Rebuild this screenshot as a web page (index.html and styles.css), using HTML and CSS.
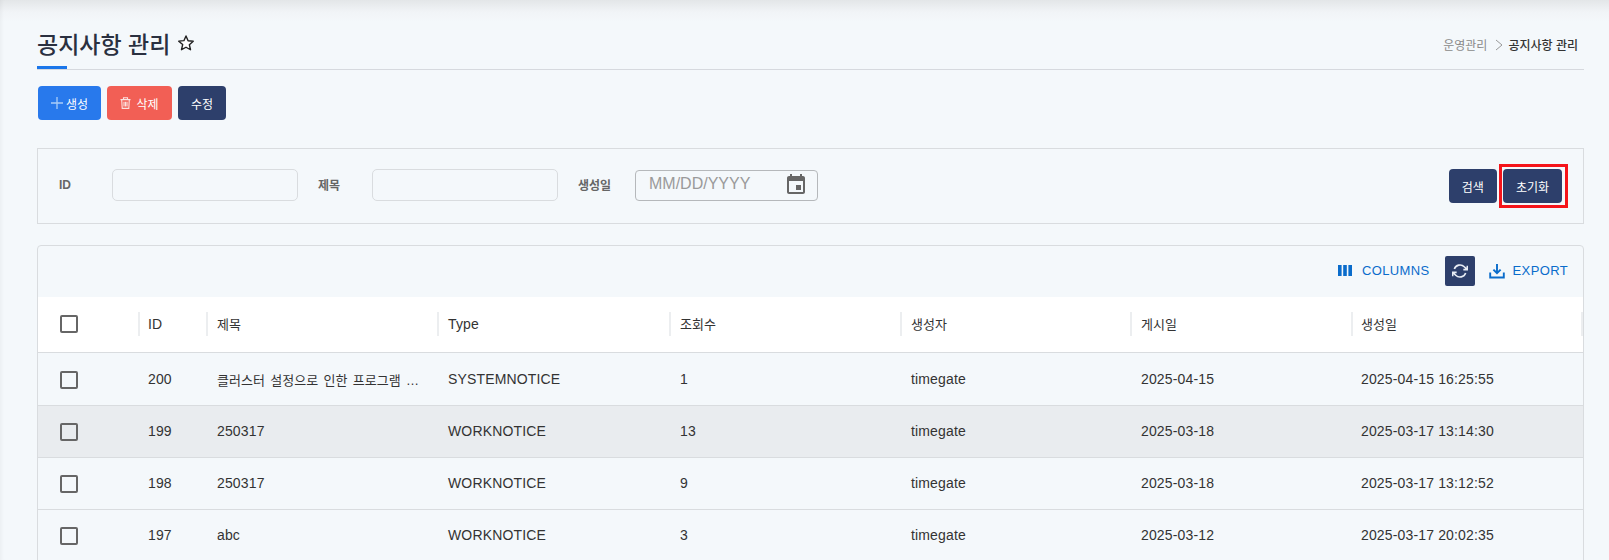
FILE: index.html
```html
<!DOCTYPE html>
<html lang="ko">

<head>
  <meta charset="UTF-8">
  <meta name="viewport" content="width=device-width, initial-scale=1.0">
  <title>공지사항 관리</title>
  <link rel="stylesheet" href="styles.css">
</head>

<body>
  <div class="page">
    <!-- Title -->
    <div class="page-head">
      <div class="page-title">
        <h1>공지사항 관리</h1>
        <svg class="star" viewBox="0 0 24 24" width="20" height="20">
          <path d="M12 3.6l2.5 5.7 6.2.6-4.7 4.1 1.4 6.1L12 17.1l-5.4 2.9 1.4-6.1-4.7-4.1 6.2-.6z" fill="#fff" stroke="#222" stroke-width="1.7" stroke-linejoin="round" />
        </svg>
      </div>
      <div class="breadcrumb">
        <span>운영관리</span>
        <svg viewBox="0 0 10 12" width="10" height="12">
          <path d="M3 1l6 5-6 5" fill="none" stroke="#999" stroke-width="1" />
        </svg>
        <strong>공지사항 관리</strong>
      </div>
    </div>

    <div class="actions">
      <button type="button" class="btn btn-blue">
        <svg viewBox="0 0 12 12" width="12" height="12">
          <path d="M6 0v12M0 6h12" stroke="#a9cdf8" stroke-width="1.3" fill="none" />
        </svg>
        생성
      </button>
      <button type="button" class="btn btn-red">
        <svg viewBox="0 0 11 12" width="11" height="12">
          <path d="M.5 2.6h10M3.5 2.4V.7h4v1.7M1.7 2.8l.5 8.6h6.6l.5-8.6M4 4.8v4.6M5.5 4.8v4.6M7 4.8v4.6" stroke="#fbe3e0" stroke-width="1.1" fill="none" />
        </svg>
        삭제
      </button>
      <button type="button" class="btn btn-navy">수정</button>
    </div>

    <!-- Search -->
    <form class="search-box">
      <label class="search-label label-id">ID</label>
      <input type="text" class="search-input">
      <label class="search-label">제목</label>
      <input type="text" class="search-input">
      <label class="search-label label-date">생성일</label>
      <div class="date-input">
        <span>MM/DD/YYYY</span>
        <svg viewBox="0 0 24 24" width="24" height="24">
          <path fill="#666" d="M17 12h-5v5h5v-5zM16 1v2H8V1H6v2H5c-1.1 0-2 .9-2 2v14c0 1.1.9 2 2 2h14c1.1 0 2-.9 2-2V5c0-1.1-.9-2-2-2h-1V1h-2zm3 18H5V8h14v11z" />
        </svg>
      </div>
      <div class="search-buttons">
        <button type="button" class="btn btn-navy">검색</button>
        <button type="button" class="btn btn-navy btn-marked">초기화</button>
      </div>
    </form>

    <!-- Grid -->
    <div class="grid-box">
      <div class="toolbar">
        <button type="button" class="tool-btn">
          <svg viewBox="0 0 14 11" width="14" height="11">
            <path fill="#0a6ccb" d="M0 0h3.6v11H0zM5.2 0h3.6v11H5.2zM10.4 0H14v11h-3.6z" />
          </svg>
          COLUMNS
        </button>
        <button type="button" class="refresh-btn">
          <svg viewBox="0 0 24 24" width="16" height="16">
            <path d="M23 4v6h-6M1 20v-6h6M3.5 9a9 9 0 0 1 14.9-3.4L23 10M1 14l4.6 4.4A9 9 0 0 0 20.5 15" fill="none" stroke="#e8edf5" stroke-width="2.4" />
          </svg>
        </button>
        <button type="button" class="tool-btn tool-export">
          <svg viewBox="0 0 16 16" width="16" height="16">
            <path d="M8 1v9M4.4 6.6L8 10.2l3.6-3.6M1.2 9.5v5h13.6v-5" fill="none" stroke="#0a6ccb" stroke-width="1.9" />
          </svg>
          EXPORT
        </button>
      </div>

      <div class="grid-row grid-head">
        <div class="cell"><span class="check"></span></div>
        <div class="cell">ID</div>
        <div class="cell ko">제목</div>
        <div class="cell">Type</div>
        <div class="cell ko">조회수</div>
        <div class="cell ko">생성자</div>
        <div class="cell ko">게시일</div>
        <div class="cell ko">생성일</div>
      </div>

      <div class="grid-row">
        <div class="cell"><span class="check"></span></div>
        <div class="cell">200</div>
        <div class="cell ko">클러스터 설정으로 인한 프로그램 …</div>
        <div class="cell">SYSTEMNOTICE</div>
        <div class="cell">1</div>
        <div class="cell">timegate</div>
        <div class="cell">2025-04-15</div>
        <div class="cell">2025-04-15 16:25:55</div>
      </div>
      <div class="grid-row row-hover">
        <div class="cell"><span class="check"></span></div>
        <div class="cell">199</div>
        <div class="cell">250317</div>
        <div class="cell">WORKNOTICE</div>
        <div class="cell">13</div>
        <div class="cell">timegate</div>
        <div class="cell">2025-03-18</div>
        <div class="cell">2025-03-17 13:14:30</div>
      </div>
      <div class="grid-row">
        <div class="cell"><span class="check"></span></div>
        <div class="cell">198</div>
        <div class="cell">250317</div>
        <div class="cell">WORKNOTICE</div>
        <div class="cell">9</div>
        <div class="cell">timegate</div>
        <div class="cell">2025-03-18</div>
        <div class="cell">2025-03-17 13:12:52</div>
      </div>
      <div class="grid-row">
        <div class="cell"><span class="check"></span></div>
        <div class="cell">197</div>
        <div class="cell">abc</div>
        <div class="cell">WORKNOTICE</div>
        <div class="cell">3</div>
        <div class="cell">timegate</div>
        <div class="cell">2025-03-12</div>
        <div class="cell">2025-03-17 20:02:35</div>
      </div>
    </div>
  </div>
</body>

</html>
```

FILE: styles.css
```css
html,
body {
  margin: 0;
  padding: 0;
  height: 560px;
  overflow: hidden;
}

body {
  font-family: "Liberation Sans", "Noto Sans CJK KR", sans-serif;
  background: linear-gradient(#e3e6e8, #f1f4f7 12px, #f4f8fb 22px);
  box-shadow: inset 4px 0 4px -3px rgba(0, 0, 0, 0.05);
}

.page {
  padding: 26px 25px 0 37px;
}

/* Title */
.page-head {
  display: flex;
  justify-content: space-between;
  align-items: center;
  height: 37px;
  padding-bottom: 6px;
  border-bottom: 1px solid #d6d9de;
  position: relative;
}

.page-head::after {
  content: "";
  position: absolute;
  left: 0;
  bottom: 0;
  width: 30px;
  height: 3px;
  background-color: #1a76ea;
}

.page-title {
  display: flex;
  align-items: center;
  gap: 6px;
  margin-top: -3px;
}

.page-title h1 {
  margin: 0;
  font-size: 23px;
  font-weight: 500;
  color: #2a3040;
}

.star {
  display: block;
}

.breadcrumb {
  display: flex;
  align-items: center;
  gap: 6px;
  padding-right: 6px;
  font-size: 12px;
  color: #8a8a8a;
}

.breadcrumb svg {
  margin-right: -1px;
}

.breadcrumb strong {
  font-weight: 500;
  color: #333;
}

.actions {
  display: flex;
  gap: 6px;
  margin: 16px 0 0 1px;
}

.btn {
  display: flex;
  align-items: center;
  justify-content: center;
  gap: 3px;
  height: 34px;
  padding: 0 13px;
  border: none;
  border-radius: 4px;
  font-family: inherit;
  font-size: 12px;
  color: #fff;
  white-space: nowrap;
  cursor: pointer;
}

.btn-blue {
  width: 63px;
  padding: 0;
  background-color: #2879ec;
}

.btn-red {
  width: 65px;
  padding: 0;
  gap: 5px;
  background-color: #f25f55;
}

.btn-navy {
  background-color: #2d3f6b;
}

/* Search */
.search-box {
  display: flex;
  align-items: center;
  height: 76px;
  margin-top: 28px;
  border: 1px solid #d9dcdf;
  box-sizing: border-box;
  font-size: 12px;
}

.search-label {
  width: 54px;
  margin-left: 20px;
  margin-top: -3px;
  font-size: 12px;
  font-weight: 700;
  color: #666;
}

.label-id {
  width: 53px;
  margin-left: 21px;
}

.label-date {
  width: 57px;
}

.search-input {
  width: 186px;
  height: 32px;
  padding: 0 8px;
  margin-top: -2px;
  border: 1px solid #d9dcdf;
  border-radius: 5px;
  background: transparent;
  box-sizing: border-box;
}

.date-input {
  display: flex;
  align-items: center;
  justify-content: space-between;
  width: 183px;
  height: 31px;
  padding: 0 9px 0 13px;
  margin-top: -2px;
  border: 1px solid #b5b8bb;
  border-radius: 4px;
  box-sizing: border-box;
  font-size: 16px;
  color: #9a9a9a;
}

.date-input span {
  padding-bottom: 3px;
}

.search-buttons {
  display: flex;
  gap: 6px;
  margin-left: auto;
  margin-right: 21px;
}

/* red mark drawn over the reset button */
.btn-marked {
  position: relative;
}

.btn-marked::after {
  content: "";
  position: absolute;
  top: -5px;
  left: -4px;
  right: -6px;
  bottom: -5px;
  border: 3px solid #f5141a;
}

/* Grid */
.grid-box {
  margin-top: 21px;
  height: 400px;
  border: 1px solid #d9dcdf;
  border-radius: 4px;
  box-sizing: border-box;
}

.toolbar {
  display: flex;
  justify-content: flex-end;
  align-items: center;
  gap: 15px;
  height: 49px;
  padding: 0 15px 2px 0;
}

.tool-btn {
  display: flex;
  align-items: center;
  gap: 10px;
  padding: 0;
  border: none;
  background: none;
  font-family: inherit;
  font-size: 13px;
  letter-spacing: 0.02857em;
  color: #0a6ccb;
  cursor: pointer;
}

.tool-export {
  gap: 8px;
  margin-left: -1px;
}

.refresh-btn {
  display: flex;
  align-items: center;
  justify-content: center;
  width: 30px;
  height: 30px;
  padding: 0;
  border: none;
  border-radius: 2px;
  background-color: #2d3f6b;
}

.grid-row {
  display: grid;
  grid-template-columns: 100px 68px 231px 232px 231px 230px 221px 1fr;
  height: 52px;
  border-bottom: 1px solid #d9dcdf;
  box-sizing: border-box;
  font-size: 14px;
  letter-spacing: 0.01071em;
  color: #333;
}

.grid-head {
  height: 56px;
  background-color: #fff;
}

.grid-head + .grid-row {
  height: 53px;
  padding-top: 2px;
}

.row-hover {
  background-color: #e9ecef;
}

.cell {
  display: flex;
  align-items: center;
  padding-left: 11px;
  padding-bottom: 2px;
  min-width: 0;
  white-space: pre;
  position: relative;
}

.cell:first-child {
  padding-left: 22px;
  padding-bottom: 0;
}

.cell:nth-child(2),
.cell:nth-child(8) {
  padding-left: 10px;
}

.grid-head .cell:first-child {
  padding-bottom: 1px;
}

/* hangul runs narrower in the original font */
.ko {
  font-size: 13px;
  letter-spacing: 0;
  word-spacing: 1.8px;
}

.grid-head .cell:not(:first-child)::before {
  content: "";
  position: absolute;
  left: 0;
  top: 15px;
  height: 24px;
  width: 2px;
  background-color: #eceef0;
}

.grid-head .cell:last-child::after {
  content: "";
  position: absolute;
  right: 0;
  top: 15px;
  height: 24px;
  width: 2px;
  background-color: #eceef0;
}

.check {
  display: block;
  width: 18px;
  height: 18px;
  border: 2px solid #666;
  border-radius: 2px;
  box-sizing: border-box;
}
```
